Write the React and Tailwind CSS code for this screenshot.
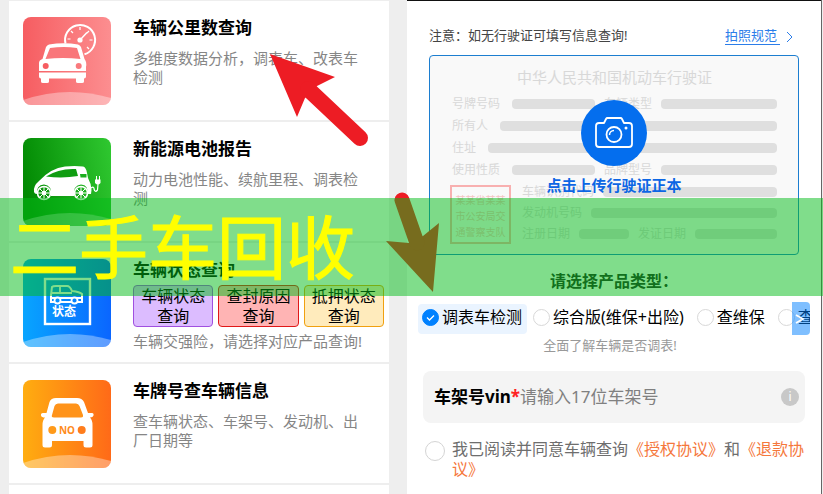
import React, { useState } from "react";

// ===== 图标底板 =====
const IconTile = ({ id, from, to, diagonal, children }) => (
  <svg viewBox="0 0 88 88" className="w-[88px] h-[88px] shrink-0" aria-hidden="true">
    <defs>
      <linearGradient id={id} x1="0" y1={diagonal ? "0.4" : "0"} x2="1" y2={diagonal ? "0.2" : "0"}>
        <stop offset="0" stopColor={from} />
        <stop offset="1" stopColor={to} />
      </linearGradient>
      <clipPath id={`${id}-clip`}>
        <rect width="88" height="88" rx="8" />
      </clipPath>
    </defs>
    <g clipPath={`url(#${id}-clip)`}>
      <rect width="88" height="88" fill={`url(#${id})`} />
      <path d="M0 83 Q44 68 88 81 V88 H0Z" fill="#fff" opacity="0.35" />
      {children}
    </g>
  </svg>
);

const MileageIcon = () => (
  <IconTile id="mileage" from="#f65d61" to="#fc8e90">
    <path d="M61.500 37.300 A15 15 0 1 0 42.500 26.500" fill="none" stroke="#fff" strokeWidth="2" />
    <path
      d="M57 10v3M48 14l2 2M44.500 22h3M66 14l-2 2M69.500 23h-3M66 32l-2-2"
      stroke="#fff"
      strokeWidth="1.200"
    />
    <path d="M57 23 L64 15.500" stroke="#fff" strokeWidth="1.500" />
    <circle cx="57" cy="23" r="2.600" fill="#fff" />
    <path
      d="M26 27.500 Q41 25 55 27.500 Q57 28 58 30 L61.500 42 Q64 45 63 50 V54 H16 V46 Q16 43 19.500 42 L23 30 Q24 28 26 27.500Z"
      fill="#fff"
    />
    <path d="M27 31 Q41 29 54 31 L57.500 42 Q40 40 22.500 42Z" fill="#f9767a" />
    <circle cx="22.700" cy="49" r="3" fill="#f65d61" />
    <circle cx="55.700" cy="49" r="3" fill="#f97a7d" />
    <path d="M16 55.500h47v4q0 2-2 2v3q0 1.500-2 1.500h-4q-2 0-2-1.500v-3H26v3q0 1.500-2 1.500h-4q-2 0-2-1.500v-3q-2 0-2-2z" fill="#fff" />
  </IconTile>
);

const BatteryIcon = () => (
  <IconTile id="battery" from="#028a03" to="#2ec62f" diagonal>
    <path
      d="M11 54 Q10 48 16 43 Q28 30 42 28.500 Q52 27.500 60 28.500 Q63 29 64 35 L65 40 Q68 45 68.500 52 L68 56 H64 Q66 47 58 46.500 Q50 47 51 58 H28 Q29 47 21 46.500 Q13 47 14 56 Q11.500 56 11 54Z"
      fill="#fff"
    />
    <path d="M23 38.500 Q36 30 53 31 L55 38 Q40 40.500 23 38.500Z" fill="#0f9d11" />
    <path d="M57 36h6.500v3.500h-6z" fill="#1cae1e" />
    {[21, 58].map((cx) => (
      <g key={cx} stroke="#fff" fill="none">
        <circle cx={cx} cy="55" r="6.500" strokeWidth="1.600" />
        <circle cx={cx} cy="55" r="1.800" fill="#fff" />
        <path d={`M${cx - 6} 55h12M${cx} 49v12M${cx - 4} 51l8 8M${cx + 4} 51l-8 8`} strokeWidth="1" />
      </g>
    ))}
    <path d="M68 50 Q71 48 71 51 Q72 55 74.500 52 L75 46" fill="none" stroke="#fff" strokeWidth="1.200" />
    <path d="M72 41.500h5.500v3.500q-2.700 3-5.500 0z" fill="#fff" />
    <path d="M73.500 38v4M76.500 38v4" stroke="#fff" strokeWidth="1" />
  </IconTile>
);

const StatusIcon = () => (
  <IconTile id="status" from="#08a5ff" to="#0a66ff">
    <rect x="22" y="20" width="45" height="45" fill="none" stroke="#fff" strokeWidth="2.400" />
    <path
      d="M29 28 Q30 27 33 27 H44 Q47 27 49 32 Q57 33 59 35 V43 H28 V36Z"
      fill="none"
      stroke="#fff"
      strokeWidth="2"
    />
    <path d="M28 34h21M37 27v7M28 39h31" stroke="#fff" strokeWidth="1.800" fill="none" />
    <circle cx="34.500" cy="41.500" r="3" fill="#0791ff" stroke="#fff" strokeWidth="1.800" />
    <circle cx="51.500" cy="41.500" r="3" fill="#0882ff" stroke="#fff" strokeWidth="1.800" />
    <text x="29" y="57" fontSize="12" fontWeight="700" fill="#fff">
      状态
    </text>
  </IconTile>
);

const PlateIcon = () => (
  <IconTile id="plate" from="#ffad10" to="#ff6a18">
    <path
      d="M33 18 H54 Q59 18 61 22 L65 33 H69 Q71 33 70.500 35.500 Q70 37.500 67 37.500 Q69.500 40 69.500 45 V65 Q69.500 67.500 67 67.500 H63 Q60.500 67.500 60.500 65 V61 H29 V65 Q29 67.500 26.500 67.500 H22 Q19.500 67.500 19.500 65 V45 Q19.500 40 22 37.500 Q18.500 37.500 18 35.500 Q17.500 33 20 33 H23.500 L26.500 22 Q28 18 33 18Z"
      fill="#fff"
    />
    <path d="M35 23.500 H53 Q55.500 23.500 56.500 26 L60 35 Q60.500 37.500 58 37.500 H31 Q28 37.500 29 35 L31.500 26 Q32.500 23.500 35 23.500Z" fill="#ff931a" />
    <circle cx="29.300" cy="50" r="4" fill="#ff9a1a" />
    <circle cx="58.700" cy="50" r="4" fill="#ff7d1c" />
    <text x="44" y="53.500" fontSize="10" fontWeight="700" fill="#ff8b1b" textAnchor="middle">
      NO
    </text>
  </IconTile>
);

// ===== 服务列表数据 =====
const services = [
  { title: "车辆公里数查询", desc: "多维度数据分析，调表车、改表车检测", Icon: MileageIcon },
  { title: "新能源电池报告", desc: "动力电池性能、续航里程、调表检测", Icon: BatteryIcon },
  {
    title: "车辆状态查询",
    desc: "车辆交强险，请选择对应产品查询!",
    Icon: StatusIcon,
    actions: [
      { name: ["车辆状态", "查询"], style: "bg-[#dcbcff] border-[#a050e0]" },
      { name: ["查封原因", "查询"], style: "bg-[#ffb4b4] border-[#e01818]" },
      { name: ["抵押状态", "查询"], style: "bg-[#ffebbc] border-[#f0a010]" },
    ],
  },
  { title: "车牌号查车辆信息", desc: "查车辆状态、车架号、发动机、出厂日期等", Icon: PlateIcon },
];

const products = ["调表车检测", "综合版(维保+出险)", "查维保", "查出险"];

const ServiceRow = ({ title, desc, Icon, actions }) => (
  <li className="flex gap-[22px] min-h-[121px] pt-4 pb-[10px] pl-[14px] pr-[5px] border-b-2 border-[#eee]">
    <Icon />
    <div className="flex-1 min-w-0">
      <h2 className="text-[17px] leading-[22px] font-bold text-black">{title}</h2>
      {actions && (
        <div className="grid grid-cols-3 gap-[5px] mt-1">
          {actions.map((a) => (
            <button
              key={a.name[0]}
              className={`border rounded text-base leading-5 text-black ${a.style}`}
            >
              {a.name[0]}
              <br />
              {a.name[1]}
            </button>
          ))}
        </div>
      )}
      <p
        className={`pr-4 text-[15px] leading-[19px] text-[#868686] ${
          actions ? "mt-[5px]" : "mt-[10px]"
        }`}
      >
        {desc}
      </p>
    </div>
  </li>
);

// ===== 行驶证示意 =====
const Bar = ({ className = "flex-1" }) => (
  <span className={`h-[10px] rounded-sm bg-[#dfdfdf] ${className}`} />
);

const LicenseSample = () => (
  <span className="block pt-[11px] pb-[10px] pl-[22px] pr-[21px] text-xs text-[#d8d8d8]">
    <span className="block text-center text-[15px] leading-5 mb-[6px]">
      中华人民共和国机动车行驶证
    </span>
    <span className="flex items-center gap-[9px] h-[22px]">
      <span className="mr-[3px]">号牌号码</span>
      <Bar className="w-[83px]" />
      <span>车辆类型</span>
      <Bar />
    </span>
    <span className="flex items-center gap-3 h-[22px]">
      所有人
      <Bar />
    </span>
    <span className="flex items-center gap-3 h-[22px]">
      住址
      <Bar />
    </span>
    <span className="flex items-center gap-[9px] h-[22px]">
      <span className="mr-[3px]">使用性质</span>
      <Bar className="w-[83px]" />
      <span>品牌型号</span>
      <Bar />
    </span>
    <span className="flex gap-[11px] -ml-[2px]">
      <span className="w-[61px] h-[59px] mt-1 border-2 border-[#f8b0b0] pt-[5px] text-center text-[10px] leading-4 text-[#f5c4c4] shrink-0">
        某某省某某
        <br />
        市公安局交
        <br />
        通警察支队
      </span>
      <span className="flex-1">
        <span className="flex items-center gap-[9px] h-[21px]">
          车辆识别代码
          <Bar />
        </span>
        <span className="flex items-center gap-[9px] h-[21px]">
          发动机号码
          <Bar />
        </span>
        <span className="flex items-center gap-[9px] h-[21px]">
          注册日期
          <Bar className="w-[50px]" />
          <span>发证日期</span>
          <Bar />
        </span>
      </span>
    </span>
  </span>
);

const CameraIcon = () => (
  <svg viewBox="0 0 38 32" className="w-[38px] h-8" fill="none" stroke="#fff" strokeWidth="1.800" aria-hidden="true">
    <path d="M4 6h5l2-4q.5-1 1.500-1h13q1 0 1.500 1l2 4h5q3 0 3 3v18q0 3-3 3H4q-3 0-3-3V9q0-3 3-3z" strokeLinejoin="round" />
    <circle cx="19" cy="17.500" r="7.500" />
    <path d="M14.500 18a4.500 4.500 0 0 1 4.500-4.500" strokeWidth="1.500" />
    <circle cx="31" cy="11" r="1.500" fill="#fff" stroke="none" />
  </svg>
);

const ProductOption = ({ name, checked, onChange }) => (
  <label
    className={`flex items-center gap-[3px] h-[30px] pl-1 pb-1 shrink-0 text-base leading-[26px] text-black ${
      checked ? "pr-[5px] bg-[#eaf4ff] rounded-sm" : "pr-[7px]"
    }`}
  >
    <span className="relative w-[17px] h-[17px]">
      <input
        type="radio"
        name="product"
        checked={checked}
        onChange={onChange}
        className="block appearance-none w-[17px] h-[17px] rounded-full border border-[#d8d8d8] bg-white checked:bg-[#0081ff] checked:border-[#0081ff]"
      />
      {checked && (
        <svg viewBox="0 0 17 17" className="absolute inset-0 pointer-events-none" fill="none" stroke="#fff" strokeWidth="1.300">
          <path d="M5 8.500l2.500 2.500 4.500-4.500" />
        </svg>
      )}
    </span>
    {name}
  </label>
);

export default function App() {
  const [product, setProduct] = useState(0);
  const [vin, setVin] = useState("");

  return (
    <div className="relative min-h-screen overflow-hidden bg-[#eee] pl-[9px] pr-px grid grid-cols-[380fr_415fr] gap-[18px] font-['Noto_Sans','Noto_Sans_CJK_SC',sans-serif]">
      {/* ===== 左侧服务列表 ===== */}
      <ul className="bg-white border-t border-[#eee]">
        {services.map((s) => (
          <ServiceRow key={s.title} {...s} />
        ))}
      </ul>

      {/* ===== 右侧查询表单 ===== */}
      <main className="bg-white border-r border-[#666] min-w-0">
        <div className="h-px bg-[#111]" />

        <div className="flex items-center justify-between pt-[25px] pl-[22px] pr-7 text-[13px] leading-[18px]">
          <p className="text-[#444]">注意：如无行驶证可填写信息查询!</p>
          <a href="#guide" className="flex items-center gap-[6px] text-[#2b7de9]">
            <span className="border-b border-[#2b7de9] -mb-px pr-[3px]">拍照规范</span>
            <svg viewBox="0 0 7 12" className="w-[7px] h-3 mt-1" fill="none" stroke="currentColor" aria-hidden="true">
              <path d="M1 1l5 5-5 5" />
            </svg>
          </a>
        </div>

        <div className="px-[22px] mt-[11px]">
          <button className="relative block w-full rounded-sm border border-[#1c7ed0] bg-[#f9f9f9] text-left">
            <LicenseSample />
            <span className="absolute inset-0 flex flex-col items-center pt-11 gap-2">
              <span className="w-[66px] h-[66px] rounded-full bg-[#046eee] flex items-center justify-center">
                <CameraIcon />
              </span>
              <span className="text-[15px] leading-[22px] font-bold text-[#0d66e4]">
                点击上传行驶证正本
              </span>
            </span>
          </button>
        </div>

        <h3 className="mt-4 text-center text-base leading-5 font-bold text-[#222]">
          请选择产品类型：
        </h3>

        <div className="relative mx-[11px] mt-[11px] h-[33px] pt-[2px] flex gap-[2px] overflow-hidden">
          {products.map((name, i) => (
            <ProductOption
              key={name}
              name={name}
              checked={product === i}
              onChange={() => setProduct(i)}
            />
          ))}
          <button
            aria-label="更多产品"
            className="absolute right-0 inset-y-0 w-[18px] rounded-r bg-[#0081ff]/50 flex items-center pl-[3px]"
          >
            <svg viewBox="0 0 10 12" className="w-[10px] h-3" fill="none" stroke="#fff" strokeWidth="1.800" aria-hidden="true">
              <path d="M1 2l7 4-7 4" />
            </svg>
          </button>
        </div>

        <p className="mt-px pr-2 text-center text-[13px] leading-[18px] text-[#999]">
          全面了解车辆是否调表!
        </p>

        <div className="mx-4 mt-[17px] h-[52px] pl-[11px] pr-[6px] flex items-center rounded-lg bg-[#f4f4f4] text-[17px]">
          <label htmlFor="vin" className="font-bold text-black shrink-0">
            车架号vin<span className="text-[#f22]">*</span>
          </label>
          <input
            id="vin"
            value={vin}
            onChange={(e) => setVin(e.target.value)}
            placeholder="请输入17位车架号"
            className="flex-1 min-w-0 bg-transparent text-black placeholder:text-[#808080] outline-none"
          />
          <button
            aria-label="车架号说明"
            className="w-[18px] h-[18px] rounded-full bg-[#c8c8c8] text-white text-xs leading-none"
          >
            i
          </button>
        </div>

        <div className="flex gap-[7px] mt-4 pl-[18px] pr-4 text-base leading-5 text-[#6e6e6e]">
          <input
            id="agree"
            type="checkbox"
            className="appearance-none shrink-0 mt-[2px] w-5 h-5 rounded-full border border-[#d4d4d4] bg-white checked:bg-[#0081ff]"
          />
          <label htmlFor="agree">
            我已阅读并同意车辆查询
            <a href="#license" className="text-[#f5783c]">《授权协议》</a>和
            <a href="#refund" className="text-[#f5783c]">《退款协议》</a>
          </label>
        </div>
      </main>

      {/* ===== 标注箭头 ===== */}
      <svg
        viewBox="0 0 823 494"
        className="absolute left-0 top-0 w-[823px] h-[494px] pointer-events-none"
        fill="#ed1c24"
        stroke="#ed1c24"
        aria-hidden="true"
      >
        <path d="M270 54 L335 77 L317 86 L305 98 L297 117Z" stroke="none" />
        <path d="M308 89 L360 138" strokeWidth="16" strokeLinecap="round" />
        <path d="M433 292 L386 241 L409 243 L423 236 L439 223Z" stroke="none" />
        <path d="M402 200 L417 243" strokeWidth="15" strokeLinecap="round" />
      </svg>

      {/* ===== 横幅 ===== */}
      <div className="absolute inset-x-0 top-[198px] h-[98px] flex items-center pl-[10px] bg-[#02bc18]/50 pointer-events-none">
        <span className="text-[69px] leading-[98px] text-[#ff0] [-webkit-text-stroke:1px_#ff0]">
          二手车回收
        </span>
      </div>
    </div>
  );
}
